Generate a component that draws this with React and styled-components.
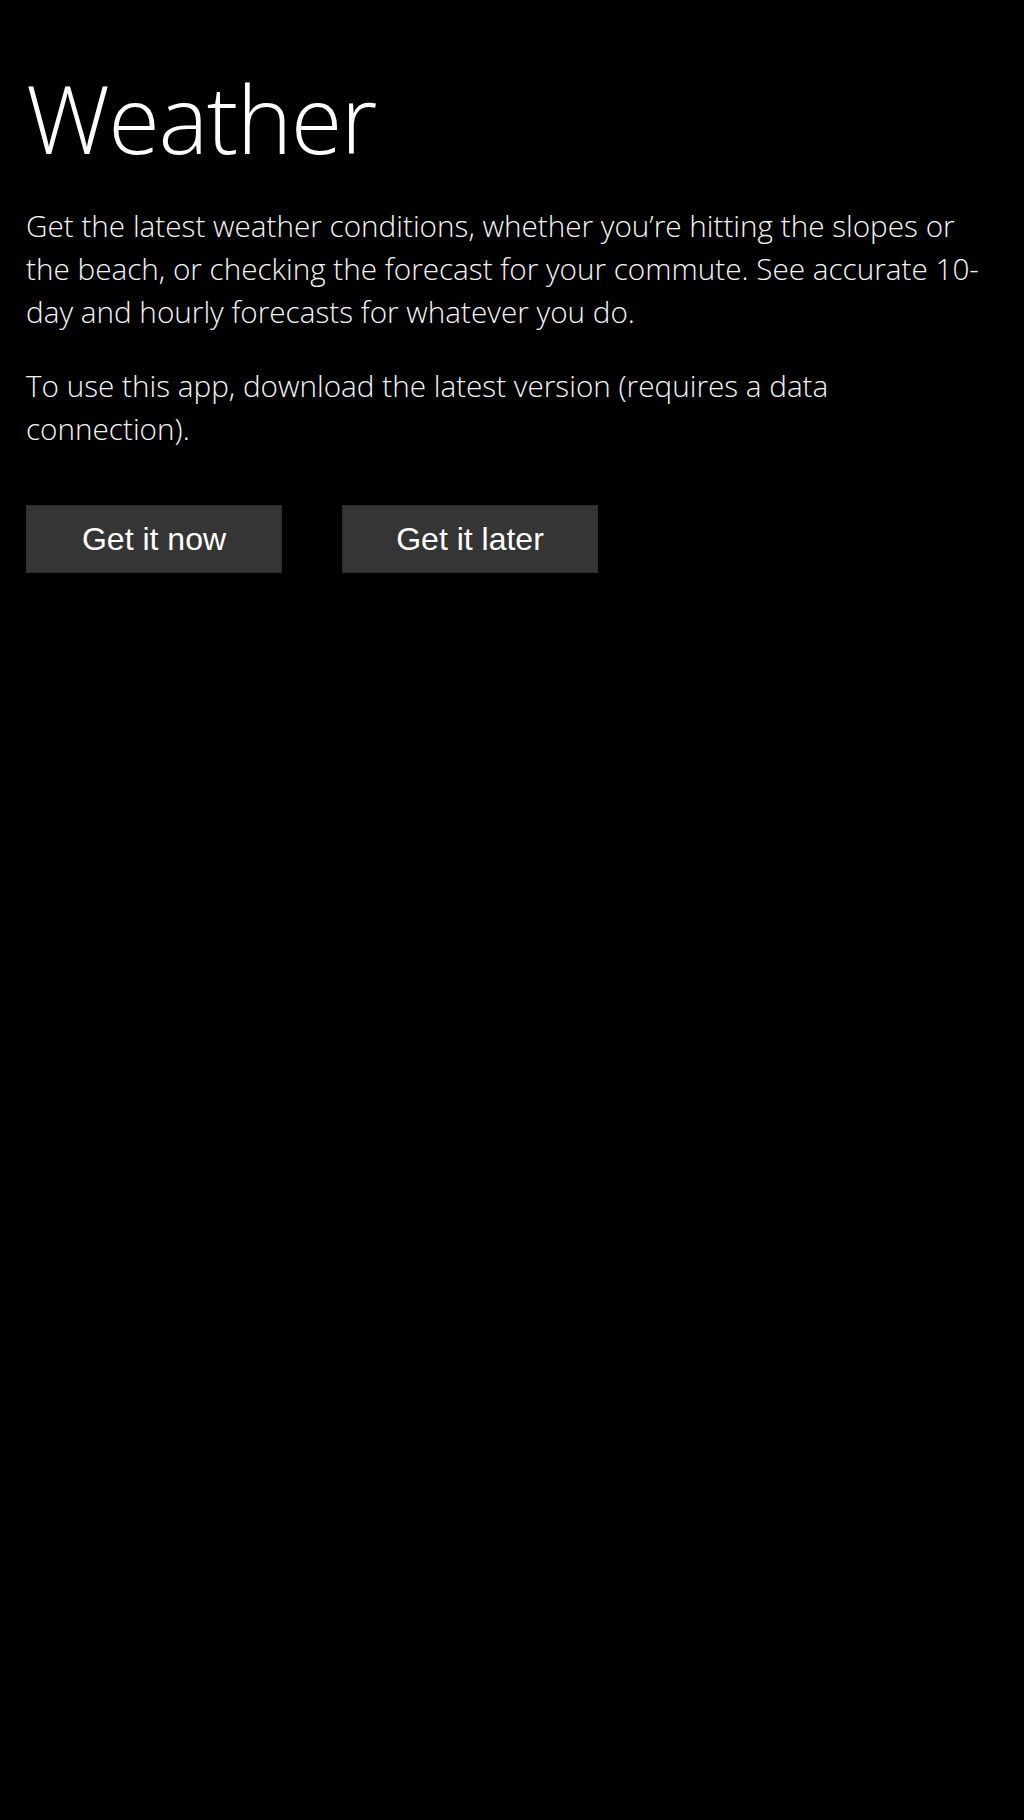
import React from 'react';
import styled, { createGlobalStyle } from 'styled-components';

const GlobalStyle = createGlobalStyle`
  html, body {
    margin: 0;
    padding: 0;
    background: #000;
  }
  body {
    min-height: 1820px;
  }
`;

const Page = styled.div`
  display: flex;
  flex-direction: column;
  padding: 63px 34px 0 26px;
  color: #fff;
  font-family: "Open Sans", "Noto Sans", sans-serif;
`;

const Title = styled.h1`
  margin: 0 0 31px;
  font-size: 94px;
  line-height: 110px;
  font-weight: 300;
  letter-spacing: -1.5px;
`;

const Copy = styled.p`
  margin: 0 0 31px;
  font-size: 29.7px;
  line-height: 43px;
  font-weight: 300;
  color: #f4f4f4;
`;

const Actions = styled.div`
  display: flex;
  gap: 60px;
  margin-top: 24px;
`;

const Button = styled.button`
  width: 256px;
  height: 68px;
  background: #353535;
  border: 1px solid #2c2c2c;
  color: #fff;
  font-family: "Liberation Sans", Arial, sans-serif;
  font-size: 32px;
  padding: 0;
  cursor: pointer;
`;

export default () => (
  <>
    <GlobalStyle/>
    <Page>
      <Title>Weather</Title>
      <Copy>
        Get the latest weather conditions, whether you’re hitting the slopes or the beach, or checking the forecast for your commute. See accurate 10-day and hourly forecasts for whatever you do.
      </Copy>
      <Copy>
        To use this app, download the latest version (requires a data connection).
      </Copy>
      <Actions>
        <Button>Get it now</Button>
        <Button>Get it later</Button>
      </Actions>
    </Page>
  </>
);
